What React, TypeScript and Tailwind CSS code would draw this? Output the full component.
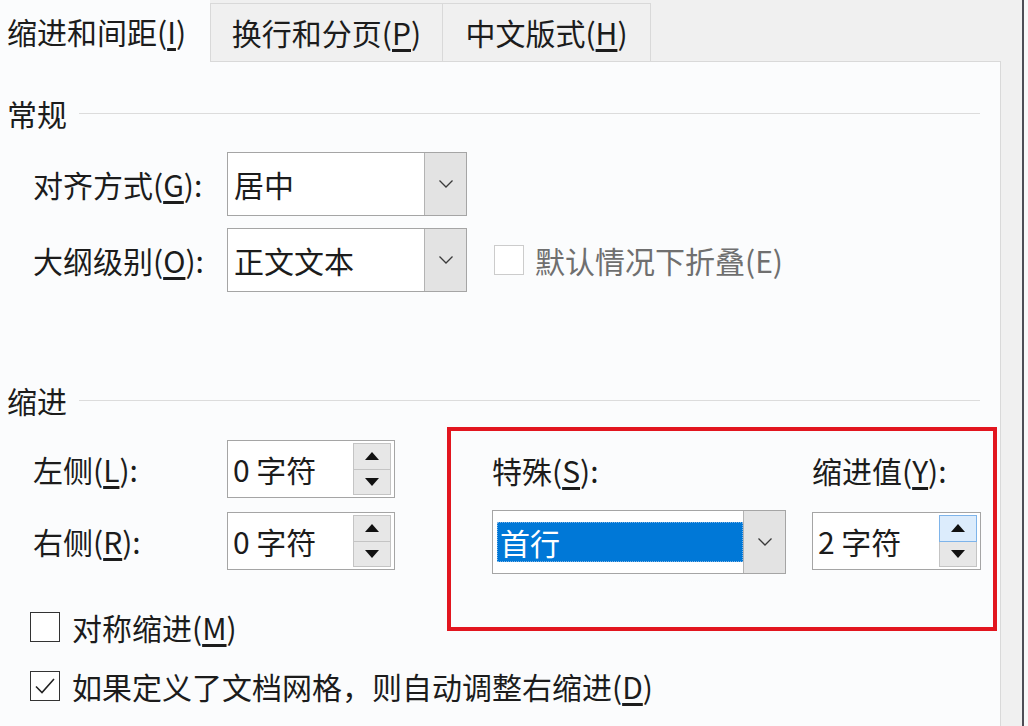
import React from "react";

function Chevron() {
  return (
    <svg width="16" height="10" viewBox="0 0 16 10" fill="none">
      <path d="M1.5 1.5 L8 8 L14.5 1.5" stroke="#3a3a3a" strokeWidth="1.3" />
    </svg>
  );
}

function Select({ value, highlighted, width }: { value: string; highlighted?: boolean; width: string }) {
  return (
    <div className={`flex h-[64px] ${width} border border-[#a5a5a5] bg-white`}>
      <div className="flex flex-1 items-center pl-[4px]">
        {highlighted ? (
          <div className="flex h-[40px] w-full items-center border border-dotted border-[#7fb4e6] bg-[#0078d7] pl-[2px] text-white">
            {value}
          </div>
        ) : (
          <span className="pl-[2px]">{value}</span>
        )}
      </div>
      <div className="flex w-[42px] items-center justify-center border-l border-[#b3b3b3] bg-[#e3e3e3]">
        <Chevron />
      </div>
    </div>
  );
}

function Tri({ up }: { up?: boolean }) {
  return (
    <svg width="14" height="8" viewBox="0 0 14 8">
      {up ? <path d="M7 0 L14 8 L0 8 Z" fill="#111" /> : <path d="M0 0 L14 0 L7 8 Z" fill="#111" />}
    </svg>
  );
}

function Spin({ value, active, width }: { value: string; active?: boolean; width: string }) {
  return (
    <div className={`flex h-[58px] ${width} border border-[#a5a5a5] bg-white py-[2px] pr-[3px]`}>
      <div className="flex flex-1 items-center pl-[5px]">{value}</div>
      <div className="flex w-[38px] flex-col">
        <div
          className={`flex flex-1 items-center justify-center border ${
            active ? "border-[#7eb4ea] bg-[#dcecfc]" : "border-[#c4c4c4] bg-[#e7e7e7]"
          }`}
        >
          <Tri up />
        </div>
        <div className="flex flex-1 items-center justify-center border border-t-0 border-[#c4c4c4] bg-[#e7e7e7]">
          <Tri />
        </div>
      </div>
    </div>
  );
}

function CheckBox({ checked, disabled }: { checked?: boolean; disabled?: boolean }) {
  return (
    <div
      className={`flex h-[30px] w-[30px] shrink-0 items-center justify-center border bg-white ${
        disabled ? "border-[#cccccc]" : "border-[#333333]"
      }`}
    >
      {checked && (
        <svg width="22" height="18" viewBox="0 0 22 18" fill="none">
          <path d="M2 9.5 L8 15.5 L20 2" stroke="#222" strokeWidth="1.6" />
        </svg>
      )}
    </div>
  );
}

function SectionHeader({ title }: { title: string }) {
  return (
    <div className="flex h-[40px] items-center pl-[7px] pr-[20px]">
      <span>{title}</span>
      <div className="ml-[12px] h-px flex-1 bg-[#dcdcdc]" />
    </div>
  );
}

export default function App() {
  return (
    <div className="flex h-[726px] w-[1028px] overflow-hidden bg-[#f0f0f0] font-['Noto_Sans_CJK_SC','Noto_Sans',sans-serif] text-[30px] leading-none text-[#1c1c1c]">
      <div className="flex w-[1001px] flex-col">
        {/* Tabs */}
        <div className="flex h-[62px] items-end">
          <div className="flex h-[62px] w-[210px] items-center bg-[#fbfcfd] pb-[1px] pl-[7px]">
            缩进和间距(<span className="underline underline-offset-4">I</span>)
          </div>
          <div className="flex h-[59px] w-[233px] items-center justify-center border border-[#d9d9d9] bg-[#f0f0f0] pb-[2px]">
            换行和分页(<span className="underline underline-offset-4">P</span>)
          </div>
          <div className="flex h-[59px] w-[208px] items-center justify-center border border-l-0 border-[#d9d9d9] bg-[#f0f0f0] pb-[2px]">
            中文版式(<span className="underline underline-offset-4">H</span>)
          </div>
          <div className="h-full flex-1 border-b border-[#d9d9d9]" />
        </div>

        {/* Panel */}
        <div className="flex flex-1 flex-col border-r border-[#d9d9d9] bg-[#fbfcfd] pt-[31px]">
          <SectionHeader title="常规" />

          <div className="mt-[19px] flex flex-col pl-[33px]">
            <div className="flex items-center">
              <div className="w-[194px]">
                对齐方式(<span className="underline underline-offset-4">G</span>):
              </div>
              <Select value="居中" width="w-[240px]" />
            </div>
            <div className="mt-[12px] flex items-center">
              <div className="w-[194px]">
                大纲级别(<span className="underline underline-offset-4">O</span>):
              </div>
              <Select value="正文文本" width="w-[240px]" />
              <div className="ml-[27px] flex items-center text-[#6f6f6f]">
                <CheckBox disabled />
                <span className="ml-[11px]">默认情况下折叠(E)</span>
              </div>
            </div>
          </div>

          <div className="mt-[88px]">
            <SectionHeader title="缩进" />
          </div>

          <div className="mt-[7px] flex">
            <div className="flex w-[447px] flex-col pt-[13px]">
              <div className="flex items-center pl-[33px]">
                <div className="w-[194px]">
                  左侧(<span className="underline underline-offset-4">L</span>):
                </div>
                <Spin value="0 字符" width="w-[168px]" />
              </div>
              <div className="mt-[14px] flex items-center pl-[33px]">
                <div className="w-[194px]">
                  右侧(<span className="underline underline-offset-4">R</span>):
                </div>
                <Spin value="0 字符" width="w-[168px]" />
              </div>
              <div className="mt-[42px] flex items-center pl-[30px]">
                <CheckBox />
                <span className="ml-[12px]">
                  对称缩进(<span className="underline underline-offset-4">M</span>)
                </span>
              </div>
            </div>

            <div className="flex h-[204px] w-[550px] border-[4px] border-[#e2161f] pl-[41px] pt-[19px]">
              <div className="flex w-[294px] flex-col">
                <div className="flex h-[40px] items-center">
                  特殊(<span className="underline underline-offset-4">S</span>):
                </div>
                <div className="mt-[20px]">
                  <Select value="首行" highlighted width="w-[294px]" />
                </div>
              </div>
              <div className="ml-[26px] flex w-[169px] flex-col">
                <div className="flex h-[40px] items-center">
                  缩进值(<span className="underline underline-offset-4">Y</span>):
                </div>
                <div className="mt-[22px]">
                  <Spin value="2 字符" active width="w-[169px]" />
                </div>
              </div>
            </div>
          </div>

          <div className="mt-[29px] flex items-center pl-[30px]">
            <CheckBox checked />
            <span className="ml-[12px]">
              如果定义了文档网格，则自动调整右缩进(<span className="underline underline-offset-4">D</span>)
            </span>
          </div>
        </div>
      </div>
      <div className="w-[21px] bg-[#f0f0f0]" />
      <div className="w-[2px] bg-[#4d4d55]" />
      <div className="flex-1 bg-[#f8f8f8]" />
    </div>
  );
}
